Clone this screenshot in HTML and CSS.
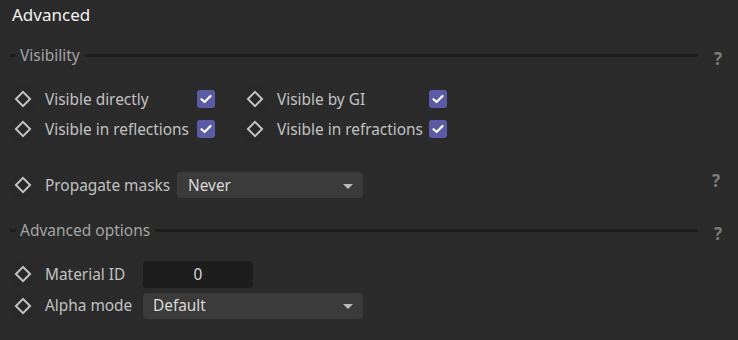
FILE: index.html
```html
<!DOCTYPE html>
<html>
<head>
    <meta charset="UTF-8">
    <link rel="stylesheet" href="styles.css">
</head>
<body>
    <div class="panel">
        <div class="title">Advanced</div>

        <div class="section-head">
            <span class="dash"></span>
            <span class="head-text">Visibility</span>
            <span class="rule"></span>
            <span class="help">?</span>
        </div>

        <div class="grid">
            <div class="prop">
                <span class="key"><i></i></span>
                <span class="label wide">Visible directly</span>
                <span class="check"><svg viewBox="0 0 18 18" width="18" height="18"><path d="M4.5 9.2 L7.6 12 L13.5 6" fill="none" stroke="#fff" stroke-width="2.2" stroke-linecap="round" stroke-linejoin="round"/></svg></span>
            </div>
            <div class="prop">
                <span class="key"><i></i></span>
                <span class="label wide">Visible by GI</span>
                <span class="check"><svg viewBox="0 0 18 18" width="18" height="18"><path d="M4.5 9.2 L7.6 12 L13.5 6" fill="none" stroke="#fff" stroke-width="2.2" stroke-linecap="round" stroke-linejoin="round"/></svg></span>
            </div>
            <div class="prop">
                <span class="key"><i></i></span>
                <span class="label wide">Visible in reflections</span>
                <span class="check"><svg viewBox="0 0 18 18" width="18" height="18"><path d="M4.5 9.2 L7.6 12 L13.5 6" fill="none" stroke="#fff" stroke-width="2.2" stroke-linecap="round" stroke-linejoin="round"/></svg></span>
            </div>
            <div class="prop">
                <span class="key"><i></i></span>
                <span class="label wide">Visible in refractions</span>
                <span class="check"><svg viewBox="0 0 18 18" width="18" height="18"><path d="M4.5 9.2 L7.6 12 L13.5 6" fill="none" stroke="#fff" stroke-width="2.2" stroke-linecap="round" stroke-linejoin="round"/></svg></span>
            </div>
        </div>

        <div class="prop row-masks">
            <span class="key"><i></i></span>
            <span class="label masks">Propagate masks</span>
            <span class="select"><span>Never</span><b class="arrow"></b></span>
            <span class="spacer"></span>
            <span class="help up">?</span>
        </div>

        <div class="section-head head-adv">
            <span class="dash"></span>
            <span class="head-text">Advanced options</span>
            <span class="rule"></span>
            <span class="help">?</span>
        </div>

        <div class="prop row-id">
            <span class="key"><i></i></span>
            <span class="label short">Material ID</span>
            <span class="number">0</span>
        </div>
        <div class="prop row-alpha">
            <span class="key"><i></i></span>
            <span class="label short">Alpha mode</span>
            <span class="select long"><span>Default</span><b class="arrow"></b></span>
        </div>
    </div>
</body>
</html>
```

FILE: styles.css
```css
html, body { margin: 0; padding: 0; background: #2b2b2b; }
body { font-family: "Noto Sans", "Open Sans", sans-serif; font-size: 15.4px; color: #c2c2c2; width: 738px; height: 340px; overflow: hidden; }
.panel { padding: 0; }
.title { height: 30px; line-height: 30px; padding-left: 12px; font-size: 17px; color: #f2f2f2; }

.section-head { display: flex; align-items: center; height: 20px; margin-top: 15px; padding-left: 10px; }
.head-adv { margin-top: 20px; }
.dash { width: 6px; height: 3px; background: #1e1e1e; }
.head-text { margin: 0 5px 0 4px; color: #a3a3a3; font-size: 15.5px; }
.rule { flex: 1; height: 3px; background: #1e1e1e; }
.help { width: 40px; text-align: center; color: #7c7c7c; font-weight: bold; font-size: 17px; position: relative; top: 3px; }
.help.up { top: -5px; width: 44px; }

.grid { display: grid; grid-template-columns: 232px 232px; margin-top: 19px; }
.prop { display: flex; align-items: center; height: 30px; padding-left: 10px; }
.key { width: 26px; height: 26px; margin-right: 9px; border-radius: 50%; background: #292929; display: flex; align-items: center; justify-content: center; flex: none; }
.key i { width: 8px; height: 8px; border: 2px solid #c4c4c4; transform: rotate(45deg); }
.label { white-space: nowrap; flex: none; }
.label.wide { width: 152px; }
.label.masks { width: 132px; }
.label.short { width: 98px; }
.check { width: 18px; height: 18px; border-radius: 3px; background: #5c5ca6; display: flex; }

.row-masks { margin-top: 26px; }
.select { display: flex; align-items: center; justify-content: space-between; width: 186px; height: 26px; padding: 0 10px 0 11px; box-sizing: border-box; background: #3b3b3b; border-radius: 4px; color: #dadada; }
.select.long { width: 220px; padding-left: 10px; }
.arrow { width: 0; height: 0; border-left: 5px solid transparent; border-right: 5px solid transparent; border-top: 5px solid #bdbdbd; margin-top: 2px; }
.spacer { flex: 1; }

.row-id { margin-top: 19px; }
.row-alpha { margin-top: 1px; height: 31px; }
.number { width: 110px; height: 27px; line-height: 27px; text-align: center; background: #1d1d1d; border-radius: 4px; color: #d8d8d8; }
```
